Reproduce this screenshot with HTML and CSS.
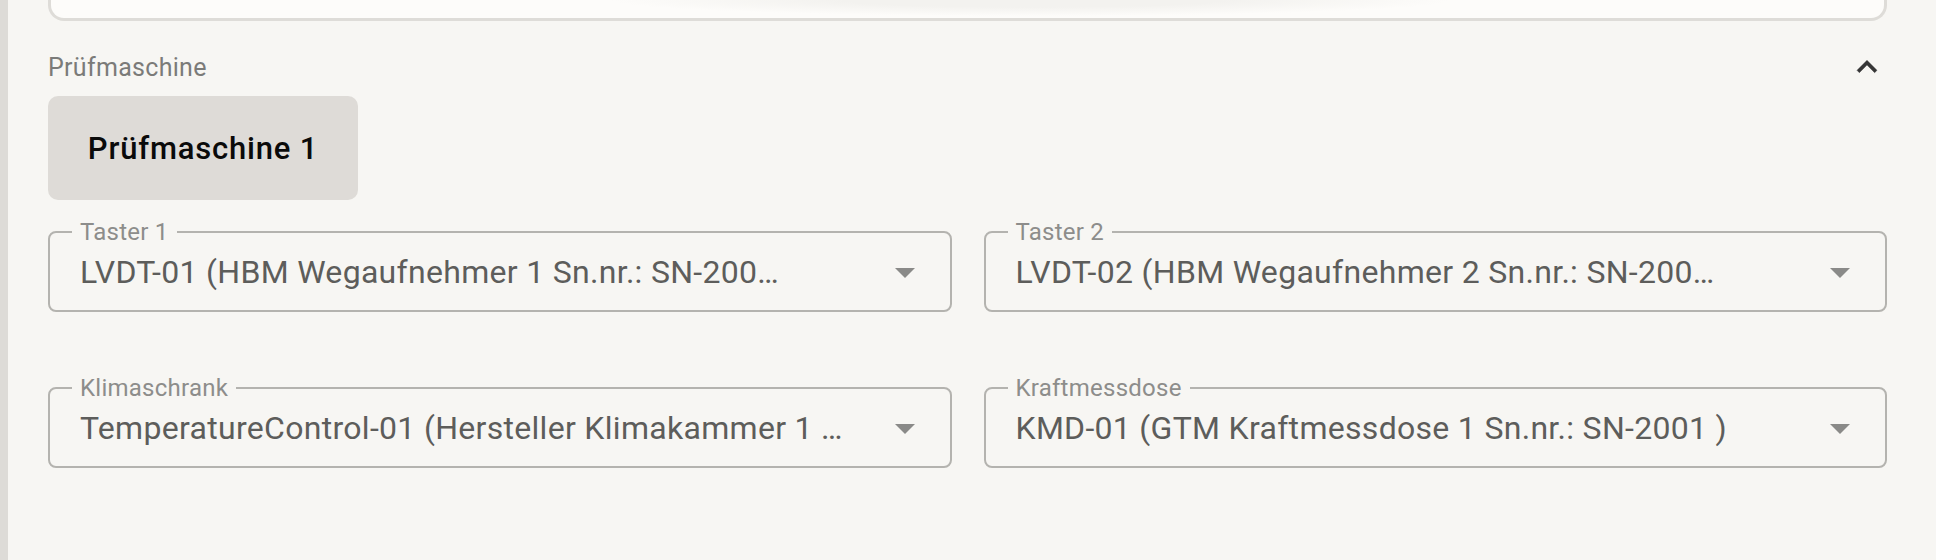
FILE: index.html
```html
<!DOCTYPE html>
<html lang="de">
<head>
<meta charset="utf-8">
<title>Prüfmaschine</title>
<link rel="stylesheet" href="styles.css">
</head>
<body>
<div class="page">
  <div class="strip"></div>
  <main class="content">
    <div class="card"></div>
    <div class="section-head">
      <span class="section-title">Prüfmaschine</span>
      <svg class="chev" viewBox="0 0 24 24"><path d="M12 8l-6 6 1.41 1.41L12 10.83l4.59 4.58L18 14z"/></svg>
    </div>
    <div class="machine-btn">Prüfmaschine 1</div>
    <div class="grid">
      <fieldset class="field">
        <legend class="field-label">Taster 1</legend>
        <div class="field-row">
          <span class="field-value">LVDT-01 (HBM Wegaufnehmer 1 Sn.nr.: SN-200…</span>
          <svg class="drop" viewBox="0 0 24 24"><path d="M7 10l5 5 5-5z"/></svg>
        </div>
      </fieldset>
      <fieldset class="field">
        <legend class="field-label">Taster 2</legend>
        <div class="field-row">
          <span class="field-value">LVDT-02 (HBM Wegaufnehmer 2 Sn.nr.: SN-200…</span>
          <svg class="drop" viewBox="0 0 24 24"><path d="M7 10l5 5 5-5z"/></svg>
        </div>
      </fieldset>
      <fieldset class="field">
        <legend class="field-label">Klimaschrank</legend>
        <div class="field-row">
          <span class="field-value">TemperatureControl-01 (Hersteller Klimakammer 1 …</span>
          <svg class="drop" viewBox="0 0 24 24"><path d="M7 10l5 5 5-5z"/></svg>
        </div>
      </fieldset>
      <fieldset class="field">
        <legend class="field-label">Kraftmessdose</legend>
        <div class="field-row">
          <span class="field-value">KMD-01 (GTM Kraftmessdose 1 Sn.nr.: SN-2001 )</span>
          <svg class="drop" viewBox="0 0 24 24"><path d="M7 10l5 5 5-5z"/></svg>
        </div>
      </fieldset>
    </div>
  </main>
</div>
</body>
</html>
```

FILE: styles.css
```css
html, body {
  margin: 0;
  padding: 0;
  background: #f7f6f3;
  font-family: Roboto, "Liberation Sans", sans-serif;
}

.page {
  display: flex;
  min-height: 560px;
}

.strip {
  width: 8px;
  flex: none;
  background: #dddbd7;
}

.content {
  flex: 1;
  min-width: 0;
  padding: 0 49px 0 40px;
}

.card {
  height: 18px;
  border: 3px solid #dedcd8;
  border-top: none;
  border-radius: 0 0 16px 16px;
  background:
    radial-gradient(ellipse 420px 16px at 53.5% 0, #f3f2ef 45%, rgba(253, 252, 250, 0)),
    #fdfcfa;
}

.section-head {
  display: flex;
  align-items: center;
  justify-content: space-between;
  height: 40px;
  margin-top: 26px;
}

.section-title {
  font-size: 25px;
  letter-spacing: 0.3px;
  color: #7b7b79;
}

.chev {
  width: 40px;
  height: 40px;
  fill: #363636;
  stroke: #363636;
  stroke-width: 0.25;
}

.machine-btn {
  width: 310px;
  height: 104px;
  margin-top: 9px;
  display: flex;
  align-items: center;
  justify-content: center;
  background: #dedbd7;
  border-radius: 10px;
  font-size: 31px;
  font-weight: 500;
  letter-spacing: 0.8px;
  color: #0a0a0a;
}

.grid {
  display: grid;
  grid-template-columns: 1fr 1fr;
  column-gap: 32px;
  row-gap: 64px;
  margin-top: 20px;
}

.field {
  min-width: 0;
  margin: 0;
  padding: 0 21px 10px 22px;
  border: 2px solid #b4b3af;
  border-radius: 8px;
}

.field-label {
  padding: 0 8px;
  font-size: 24px;
  line-height: 24px;
  letter-spacing: 0.25px;
  color: #8d8d8b;
}

.field-row {
  display: flex;
  align-items: center;
  height: 56px;
  padding-left: 8px;
}

.field-value {
  flex: 1;
  min-width: 0;
  white-space: nowrap;
  overflow: hidden;
  text-overflow: ellipsis;
  font-size: 32px;
  letter-spacing: 0.3px;
  color: #5d5d5b;
}

.drop {
  flex: none;
  width: 48px;
  height: 48px;
  fill: #8a8a88;
}
```
